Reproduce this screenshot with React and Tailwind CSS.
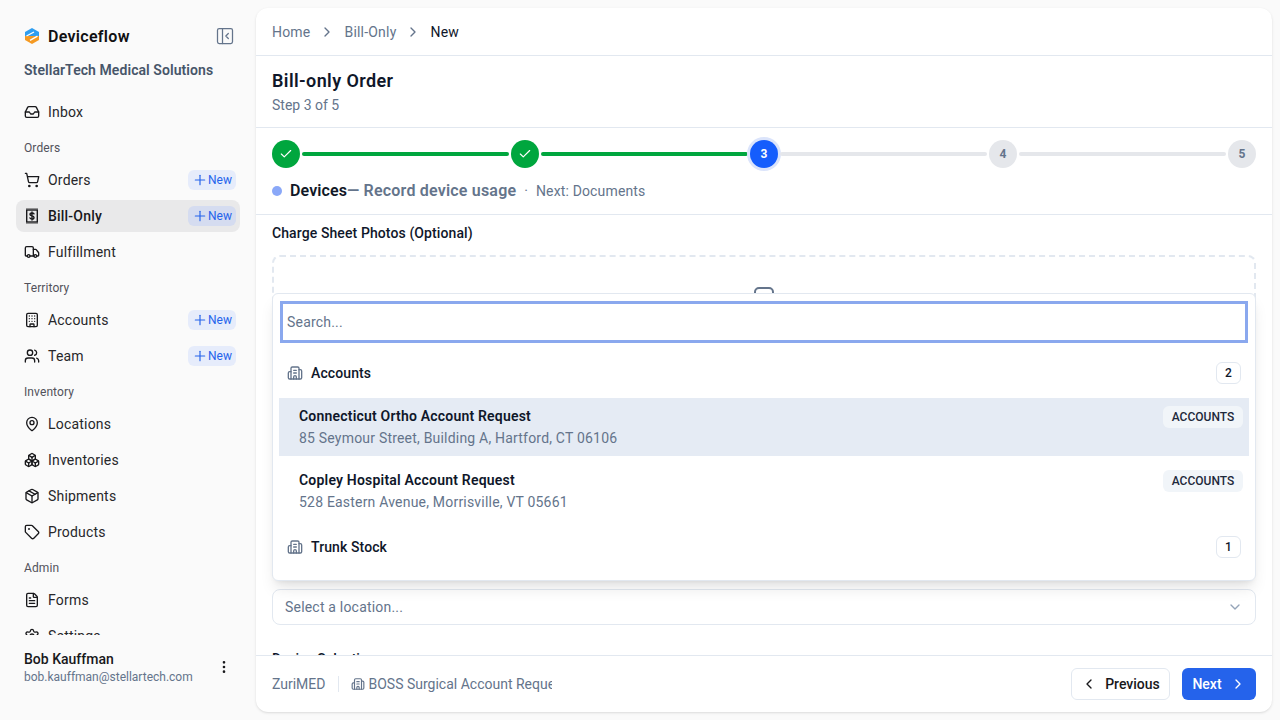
import React from 'react';
import {
  Inbox, ShoppingCart, Truck, Building, Users, MapPin, Boxes, Package, Tag, FileText, Settings,
  PanelLeftClose, Plus, EllipsisVertical, ChevronRight, ChevronLeft, ChevronDown, Check, Building2,
} from 'lucide-react';

const FONT = { fontFamily: 'Roboto, sans-serif' };

function Logo() {
  return (
    <svg width="16" height="16" viewBox="0 0 16 16">
      <path d="M8 0 L15 4 V8 H1 V4 Z" fill="#2f9ef0" />
      <path d="M1 8 H15 V12 L8 16 L1 12 Z" fill="#f59a23" />
      <path d="M2.5 8 L10 4 M6 12.4 L13.5 8.2" stroke="#fff" strokeWidth="1.4" />
    </svg>
  );
}

function ReceiptDollar({ size = 16, className }) {
  return (
    <svg width={size} height={size} viewBox="0 0 16 16" fill="none" stroke="currentColor" strokeWidth="1.4" className={className}>
      <rect x="2.7" y="2" width="10.6" height="12" />
      <path d="M2.5 0.6 H13.5 M2.5 15.4 H13.5" strokeWidth="0.9" strokeDasharray="1 1" />
      <path d="M10 5.8 C9.6 5.2 9 5 8 5 C6.8 5 6 5.5 6 6.4 C6 8 10 7.4 10 9.4 C10 10.4 9.2 11 8 11 C7 11 6.3 10.7 6 10 M8 4 V12" strokeLinecap="round" />
    </svg>
  );
}

function NavItem({ icon: Icon, label, isNew, active }) {
  return (
    <div className={`flex h-8 items-center rounded-lg pl-2 pr-1 text-sm tracking-[0.2px] ${active ? 'bg-[#e9e9ea] font-medium text-[#18181b]' : 'text-[#27272a]'}`}>
      <Icon size={16} className="mr-2 shrink-0 text-[#18181b]" />
      <span className="flex-1">{label}</span>
      {isNew && (
        <span className={`flex h-5 w-12 items-center justify-center rounded-md text-xs font-normal tracking-normal text-[#2563eb] ${active ? 'bg-[#d5dcf0]' : 'bg-[#e6ecfb]'}`}>
          <Plus size={16} strokeWidth={1.75} />New
        </span>
      )}
    </div>
  );
}

function SectionLabel({ children }) {
  return <div className="mt-1 flex h-8 items-center px-2 text-xs tracking-[0.1px] text-[#52525b]">{children}</div>;
}

function Sidebar() {
  return (
    <aside className="flex h-full w-[256px] shrink-0 flex-col">
      <div className="px-6 pt-[18px]">
        <div className="flex h-9 items-center">
          <Logo />
          <span className="ml-2 flex-1 pt-px text-base font-semibold tracking-[0.3px] text-[#111113]">Deviceflow</span>
          <PanelLeftClose size={20} strokeWidth={1.5} className="-mr-[3px] text-[#64748b]" />
        </div>
        <div className="mt-[6px] text-sm font-semibold tracking-[0.07px] text-[#475569]">StellarTech Medical Solutions</div>
      </div>
      <nav className="mt-[16px] h-[539px] overflow-hidden px-4">
        <NavItem icon={Inbox} label="Inbox" />
        <SectionLabel>Orders</SectionLabel>
        <div className="flex flex-col gap-1">
          <NavItem icon={ShoppingCart} label="Orders" isNew />
          <NavItem icon={ReceiptDollar} label="Bill-Only" isNew active />
          <NavItem icon={Truck} label="Fulfillment" />
        </div>
        <SectionLabel>Territory</SectionLabel>
        <div className="flex flex-col gap-1">
          <NavItem icon={Building} label="Accounts" isNew />
          <NavItem icon={Users} label="Team" isNew />
        </div>
        <SectionLabel>Inventory</SectionLabel>
        <div className="flex flex-col gap-1">
          <NavItem icon={MapPin} label="Locations" />
          <NavItem icon={Boxes} label="Inventories" />
          <NavItem icon={Package} label="Shipments" />
          <NavItem icon={Tag} label="Products" />
        </div>
        <SectionLabel>Admin</SectionLabel>
        <div className="flex flex-col gap-1">
          <NavItem icon={FileText} label="Forms" />
          <NavItem icon={Settings} label="Settings" />
        </div>
      </nav>
      <div className="flex items-center px-6 pt-[14px]">
        <div className="flex-1">
          <div className="text-sm font-medium leading-5 text-[#18181b]">Bob Kauffman</div>
          <div className="text-xs leading-4 text-[#64748b]">bob.kauffman@stellartech.com</div>
        </div>
        <EllipsisVertical size={16} className="text-[#18181b]" />
      </div>
    </aside>
  );
}

function StepDone() {
  return (
    <div className="flex h-7 w-7 shrink-0 items-center justify-center rounded-full bg-[#00a63e] text-white">
      <Check size={14} />
    </div>
  );
}

function StepTodo({ n }) {
  return (
    <div className="flex h-7 w-7 shrink-0 items-center justify-center rounded-full bg-[#e5e7eb] text-xs font-bold text-[#64748b]">{n}</div>
  );
}

function Stepper() {
  return (
    <div className="border-b border-[#e2e8f0] px-4 pb-[11px] pt-3">
      <div className="flex items-center gap-[2px]">
        <StepDone />
        <div className="h-1 flex-1 rounded-full bg-[#00a63e]" />
        <StepDone />
        <div className="h-1 flex-1 rounded-full bg-[#00a63e]" />
        <div className="flex h-7 w-7 shrink-0 items-center justify-center rounded-full bg-[#155dfc] text-xs font-bold text-white ring-[3px] ring-[#dbe4fb]">3</div>
        <div className="h-1 flex-1 rounded-full bg-[#e5e7eb]" />
        <StepTodo n="4" />
        <div className="h-1 flex-1 rounded-full bg-[#e5e7eb]" />
        <StepTodo n="5" />
      </div>
      <div className="mt-[11px] flex h-6 items-center">
        <span className="mr-2 h-2.5 w-2.5 rounded-full bg-[#8aa8f8]" />
        <span className="text-base font-semibold tracking-[0.1px] text-[#111827]">Devices</span>
        <span className="text-base font-semibold tracking-[0.2px] text-[#64748b]">— Record device usage</span>
        <span className="mx-2 text-sm text-[#64748b]">·</span>
        <span className="text-sm tracking-[0.15px] text-[#64748b]">Next: Documents</span>
      </div>
    </div>
  );
}

function Group({ label, count }) {
  return (
    <div className="flex h-[50px] items-center px-[14px]">
      <Building2 size={16} className="mr-2 text-[#64748b]" />
      <span className="flex-1 text-sm font-medium tracking-[0.1px] text-[#0f172a]">{label}</span>
      <span className="flex h-[22px] w-[25px] items-center justify-center rounded-md border border-[#e2e8f0] text-xs font-medium text-[#0f172a]">{count}</span>
    </div>
  );
}

function Option({ title, address, active }) {
  return (
    <div className={`mx-[6px] flex h-[58px] justify-between py-2 pl-5 pr-[6px] ${active ? 'bg-[#e5ebf4]' : ''}`}>
      <div className="tracking-[0.2px]">
        <div className="text-sm font-semibold leading-5 text-[#0f172a]">{title}</div>
        <div className="mt-0.5 text-sm leading-5 text-[#64748b]">{address}</div>
      </div>
      <span className="flex h-[22px] w-20 items-center justify-center rounded-md bg-[#f1f5f9] text-xs font-medium text-[#1e293b]">ACCOUNTS</span>
    </div>
  );
}

function Dropdown() {
  return (
    <div className="absolute left-4 right-4 top-[78px] h-[288px] rounded-md border border-[#e2e8f0] bg-white shadow-lg">
      <div className="mx-[7px] mt-[7px] flex h-[42px] items-center border-[3px] border-[#8aa8ee] px-[4px] text-sm tracking-[0.2px] text-[#64748b]">Search...</div>
      <div className="mt-[5px]"><Group label="Accounts" count="2" /></div>
      <div className="flex flex-col gap-1.5">
        <Option title="Connecticut Ortho Account Request" address="85 Seymour Street, Building A, Hartford, CT 06106" active />
        <Option title="Copley Hospital Account Request" address="528 Eastern Avenue, Morrisville, VT 05661" />
      </div>
      <div className="mt-[2px]"><Group label="Trunk Stock" count="1" /></div>
    </div>
  );
}

export default function App() {
  return (
    <div className="flex h-[720px] w-[1280px] overflow-hidden bg-[#fafafa]" style={FONT}>
      <Sidebar />
      <main className="my-2 mr-2 flex flex-1 flex-col overflow-hidden rounded-xl bg-white shadow-sm">
        <div className="flex h-12 shrink-0 items-center gap-[9px] border-b border-[#e2e8f0] px-4 text-sm tracking-[0.2px] text-[#64748b]">
          <span>Home</span>
          <ChevronRight size={16} />
          <span>Bill-Only</span>
          <ChevronRight size={16} />
          <span className="text-[#0f172a]">New</span>
        </div>
        <div className="h-[72px] shrink-0 border-b border-[#e2e8f0] px-4 pt-[13px]">
          <h1 className="text-lg font-semibold leading-6 tracking-[0.4px] text-[#0f172a]">Bill-only Order</h1>
          <p className="mt-0.5 text-sm leading-5 text-[#64748b]">Step 3 of 5</p>
        </div>
        <Stepper />
        <div className="relative flex-1 overflow-hidden px-4 pt-2">
          <label className="block text-sm font-medium leading-5 tracking-[0.1px] text-[#0f172a]">Charge Sheet Photos (Optional)</label>
          <div className="mt-3 flex h-[290px] justify-center rounded-lg border-2 border-dashed border-[#e2e8f0] pt-7 text-[#64748b]">
            <svg width="24" height="24" viewBox="0 0 24 24" fill="none" stroke="currentColor" strokeWidth="2">
              <rect x="3" y="3" width="18" height="18" rx="4" />
            </svg>
          </div>
          <label className="mt-4 block text-sm font-medium leading-5 text-[#0f172a]">Delivery Location</label>
          <div className="mt-2 flex h-9 items-center justify-between rounded-lg border border-[#e2e8f0] px-3 text-sm tracking-[0.2px] text-[#64748b]">
            Select a location...
            <ChevronDown size={16} className="text-[#94a3b8]" />
          </div>
          <label className="mt-6 block text-sm font-medium leading-5 text-[#0f172a]">Device Selection</label>
          <Dropdown />
        </div>
        <div className="flex h-[57px] shrink-0 items-center border-t border-[#e2e8f0] px-4">
          <span className="text-sm text-[#64748b]">ZuriMED</span>
          <span className="mx-3 h-4 w-px bg-[#e2e8f0]" />
          <Building2 size={14} className="mr-1 text-[#64748b]" />
          <span className="w-[183px] overflow-hidden whitespace-nowrap text-sm text-[#64748b]">BOSS Surgical Account Request</span>
          <div className="ml-auto flex items-center gap-3">
            <button className="flex h-8 w-[99px] items-center justify-center gap-2 rounded-md border border-[#e2e8f0] bg-white text-sm font-medium text-[#18181b]">
              <ChevronLeft size={16} />Previous
            </button>
            <button className="flex h-8 w-[74px] items-center justify-center gap-2 rounded-md bg-[#2563eb] text-sm font-medium text-white">
              Next<ChevronRight size={16} />
            </button>
          </div>
        </div>
      </main>
    </div>
  );
}
